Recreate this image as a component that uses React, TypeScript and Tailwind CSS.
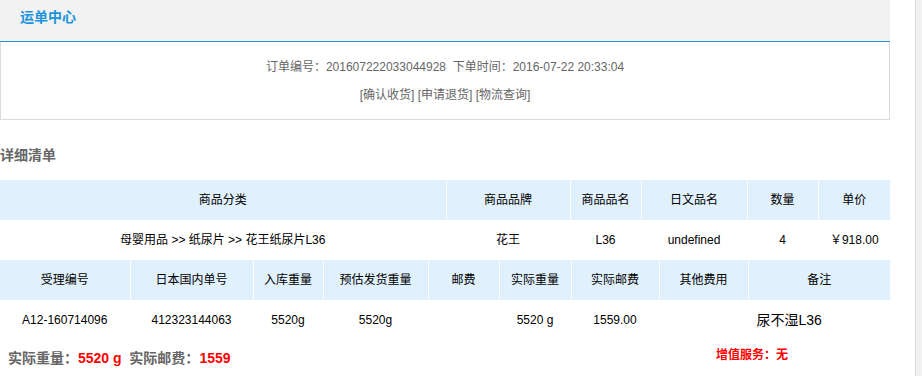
import React from "react";

const font = { fontFamily: '"Liberation Sans", Arial, "Noto Sans CJK SC", sans-serif' };

const goodsCols = [446, 124, 71, 106, 71, 72];
const goodsHead = ["商品分类", "商品品牌", "商品品名", "日文品名", "数量", "单价"];
const goodsRow = ["母婴用品 >> 纸尿片 >> 花王纸尿片L36", "花王", "L36", "undefined", "4", "￥918.00"];

const shipCols = [130, 123, 70, 105, 71, 72, 88, 89, 142];
const shipHead = ["受理编号", "日本国内单号", "入库重量", "预估发货重量", "邮费", "实际重量", "实际邮费", "其他费用", "备注"];
const shipRow = ["A12-160714096", "412323144063", "5520g", "5520g", "", "5520 g", "1559.00", ""];

function DataTable({ cols, head, children }: { cols: number[]; head: string[]; children: React.ReactNode }) {
  return (
    <table className="w-[890px] table-fixed border-collapse text-[12px] text-black">
      <colgroup>
        {cols.map((w, i) => (
          <col key={i} style={{ width: w }} />
        ))}
      </colgroup>
      <thead>
        <tr className="h-[40px] bg-[#e0f0fd]">
          {head.map((h, i) => (
            <th key={i} className={`p-0 text-center font-normal ${i > 0 ? "border-l border-white" : ""}`}>
              {h}
            </th>
          ))}
        </tr>
      </thead>
      <tbody>{children}</tbody>
    </table>
  );
}

export default function App() {
  return (
    <div className="flex min-h-screen bg-white" style={font}>
      <main className="w-[890px] shrink-0">
        {/* header */}
        <div className="h-[42px] bg-[#f2f2f2] border-b border-[#2a8fd0] pl-5 pt-[5px]">
          <span className="text-[14px] font-bold leading-[18px] text-[#1a93dc]">运单中心</span>
        </div>

        {/* order info */}
        <div className="h-[78px] border-x border-b border-[#dcdcdc] pt-4 text-center text-[12px] text-[#666]">
          <div className="leading-[18px]">
            订单编号：201607222033044928&nbsp;&nbsp;下单时间：2016-07-22 20:33:04
          </div>
          <div className="mt-[10px] leading-[18px]">
            <a className="cursor-pointer">[确认收货]</a> <a className="cursor-pointer">[申请退货]</a>{" "}
            <a className="cursor-pointer">[物流查询]</a>
          </div>
        </div>

        <h3 className="pt-[26px] pb-[16px] text-[14px] font-bold leading-[18px] text-[#666]">详细清单</h3>

        <DataTable cols={goodsCols} head={goodsHead}>
          <tr className="h-[40px]">
            {goodsRow.map((c, i) => (
              <td key={i} className={`p-0 text-center ${i > 0 ? "border-l border-white" : ""}`}>
                {c}
              </td>
            ))}
          </tr>
        </DataTable>

        <DataTable cols={shipCols} head={shipHead}>
          <tr className="h-[40px]">
            {shipRow.map((c, i) => (
              <td key={i} className={`p-0 text-center ${i > 0 ? "border-l border-white" : ""}`}>
                {c}
              </td>
            ))}
            <td className="border-l border-white p-0 pl-2 text-left text-[14px]">尿不湿L36</td>
          </tr>
        </DataTable>

        {/* summary */}
        <div className="flex items-start pt-[8px]">
          <div className="pl-2 pt-[2px] text-[14px] font-bold leading-[16px] text-[#666]">
            实际重量：<span className="text-[#ff0000]">5520 g</span>&nbsp;&nbsp;实际邮费：
            <span className="text-[#ff0000]">1559</span>
          </div>
          <div className="ml-auto mr-[102px] text-[12px] font-bold leading-[14px] text-[#ff0000]">增值服务：无</div>
        </div>
      </main>
      <div className="flex-1" />
      <div className="w-[7px] shrink-0 border-l border-[#dcdcdc] bg-[#f1f1f1]" />
    </div>
  );
}
